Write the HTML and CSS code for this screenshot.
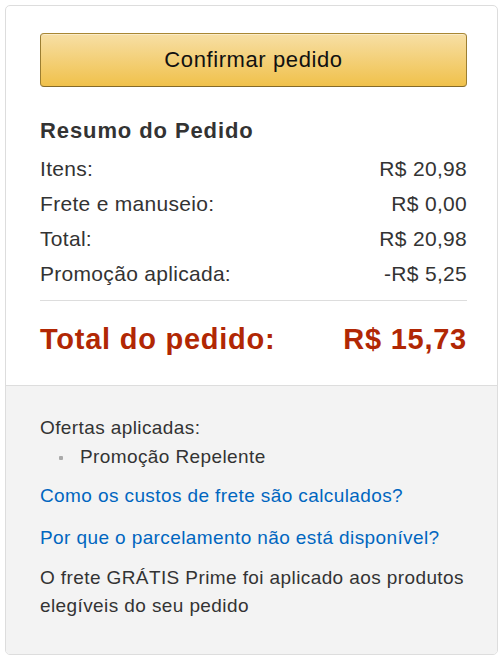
FILE: index.html
```html
<!DOCTYPE html>
<html lang="pt-BR">
<head>
<meta charset="utf-8">
<title>Resumo do Pedido</title>
<link rel="stylesheet" href="styles.css">
</head>
<body>
<div class="card">
  <div class="summary">
    <button class="confirm" type="button">Confirmar pedido</button>
    <h3 class="title">Resumo do Pedido</h3>
    <div class="rows">
      <div class="row"><span>Itens:</span><span>R$ 20,98</span></div>
      <div class="row"><span>Frete e manuseio:</span><span>R$ 0,00</span></div>
      <div class="row"><span>Total:</span><span>R$ 20,98</span></div>
      <div class="row"><span>Promoção aplicada:</span><span>-R$ 5,25</span></div>
    </div>
    <div class="grand"><span>Total do pedido:</span><span>R$ 15,73</span></div>
  </div>
  <div class="extra">
    <div class="offers">Ofertas aplicadas:</div>
    <ul class="offer-list"><li>Promoção Repelente</li></ul>
    <a class="link first" href="#">Como os custos de frete são calculados?</a>
    <a class="link second" href="#">Por que o parcelamento não está disponível?</a>
    <p class="note">O frete GRÁTIS Prime foi aplicado aos produtos elegíveis do seu pedido</p>
  </div>
</div>
</body>
</html>
```
FILE: styles.css
```css
html, body {
  margin: 0;
  padding: 0;
  background: #fff;
}
body {
  font-family: "Liberation Sans", Arial, sans-serif;
  color: #333;
}
.card {
  margin: 5px 2px 4px 5px;
  border: 1px solid #ddd;
  border-radius: 5px;
  overflow: hidden;
  height: 648px;
  display: flex;
  flex-direction: column;
}
.summary {
  padding: 27px 30px 26px 34px;
  border-bottom: 1px solid #ddd;
}
.confirm {
  display: block;
  width: 100%;
  height: 54px;
  margin: 0;
  padding: 0;
  border: 1px solid;
  border-color: #a88734 #9c7e31 #846a29;
  border-radius: 4px;
  background: linear-gradient(to bottom, #f7dfa5, #f0c14b);
  box-shadow: inset 0 1px 0 rgba(255,255,255,.4);
  font-family: "Liberation Sans", Arial, sans-serif;
  font-size: 22px;
  letter-spacing: 0.6px;
  color: #111;
}
.title {
  margin: 26px 0 2px;
  font-size: 22px;
  line-height: 36px;
  font-weight: bold;
  letter-spacing: 0.9px;
  color: #333;
}
.rows {
  border-bottom: 1px solid #ddd;
  padding-bottom: 9px;
}
.row {
  display: flex;
  justify-content: space-between;
  font-size: 21px;
  line-height: 35px;
  letter-spacing: 0.3px;
}
.grand {
  display: flex;
  justify-content: space-between;
  margin-top: 18px;
  font-size: 29px;
  line-height: 40px;
  font-weight: bold;
  letter-spacing: 0.75px;
  color: #b12704;
}
.extra {
  flex: 1;
  background: #f3f3f3;
  padding: 27px 30px 0 34px;
  font-size: 19px;
  letter-spacing: 0.4px;
  line-height: 29px;
}
.offers {
  line-height: 29px;
}
.offer-list {
  list-style: none;
  margin: 0;
  padding: 0 0 0 40px;
}
.offer-list li {
  position: relative;
}
.offer-list li::before {
  content: "";
  position: absolute;
  left: -21px;
  top: 14px;
  width: 4px;
  height: 4px;
  border-radius: 1px;
  background: #aaa;
}
.link {
  display: block;
  line-height: 28px;
  color: #0066c0;
  text-decoration: none;
}
.link.first {
  margin-top: 11px;
}
.link.second {
  margin-top: 14px;
}
.note {
  margin: 12px 0 0;
  line-height: 28px;
}
```
